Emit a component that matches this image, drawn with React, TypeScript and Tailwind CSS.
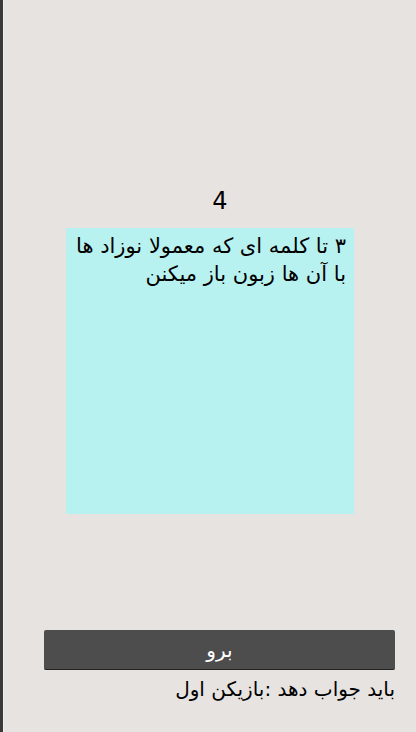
export default function App() {
  return (
    <div
      className="flex h-[732px] w-[416px] bg-[#e7e3e1] text-black"
      style={{ fontFamily: '"DejaVu Sans", "Noto Sans", sans-serif' }}
    >
      {/* left window edge */}
      <div className="w-[3px] shrink-0 bg-[#3a3a3a]" />
      <div className="w-px shrink-0 bg-[#f2f0ef]" />

      <div className="flex flex-1 flex-col">
        <div className="h-[186px]" />
        <div className="flex h-[30px] items-center justify-center pl-[20px] text-[24px] leading-none">4</div>
        <div className="h-[12px]" />
        <div className="ml-[62px] h-[286px] w-[288px] bg-[#b8f2f0] pl-[4px] pr-[8px] pt-[4px]">
          <p dir="rtl" className="text-right text-[21px] leading-[28px]">
            ۳ تا کلمه ای که معمولا نوزاد ها با آن ها زبون باز میکنن
          </p>
        </div>
        <div className="h-[116px]" />
        <button className="ml-[40px] flex h-[40px] w-[351px] items-center justify-center rounded-[2px] border-b border-[#222] bg-[#4d4d4d] text-[20px] text-white">
          <span dir="rtl">برو</span>
        </button>
        <div className="ml-[40px] w-[351px] pt-[6px] text-right text-[20px] leading-[26px]">
          <span dir="ltr">باید جواب دهد :بازیکن اول</span>
        </div>
      </div>
    </div>
  );
}
